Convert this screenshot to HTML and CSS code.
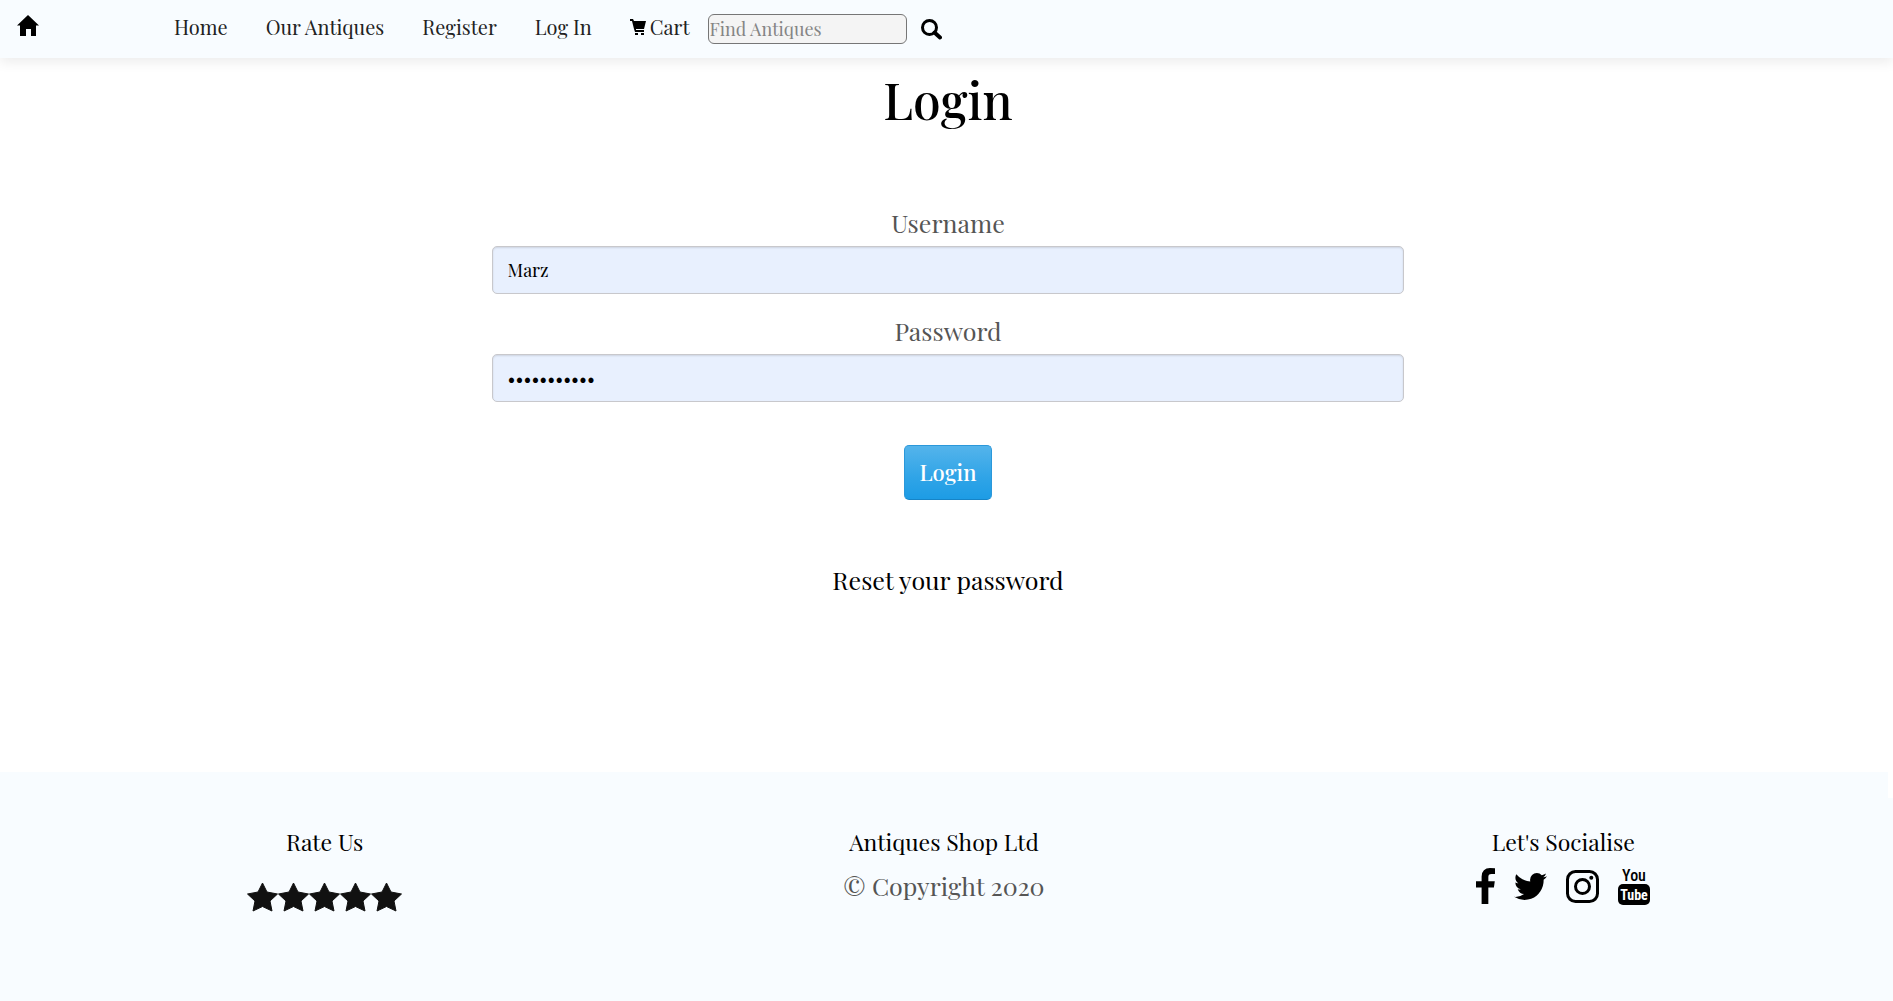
FILE: index.html
```html
<!DOCTYPE html>
<html lang="en">
<head>
<meta charset="utf-8">
<meta name="viewport" content="width=device-width, initial-scale=1">
<title>Login - Antiques Shop</title>
<link rel="stylesheet" href="styles.css">
</head>
<body>
<header class="navbar">
  <a class="brand" href="#" aria-label="Antiques Shop home">
    <svg width="22" height="22" viewBox="0 0 22 22"><path d="M11 1 22 11.500h-3V22h-5v-7H9v7H3V11.500H0z"/></svg>
  </a>
  <nav class="links">
    <a href="#">Home</a>
    <a href="#">Our Antiques</a>
    <a href="#">Register</a>
    <a href="#">Log In</a>
    <a class="cart" href="#">
      <svg width="16" height="16" viewBox="0 0 16 16"><path d="M0 0h3l1 2h12l-2 8H6v1h8v2H5L4 10 2 2H0zM5 14h3v2H5zM11 14h3v2h-3z"/></svg>
      Cart
    </a>
  </nav>
  <form class="search">
    <input type="text" placeholder="Find Antiques" aria-label="Find Antiques">
    <button type="submit" aria-label="Search">
      <svg width="21" height="21" viewBox="0 0 21 21" fill="none" stroke="#000"><circle cx="8.500" cy="8.500" r="7" stroke-width="3"/><path d="m13.500 13.500 5.500 5" stroke-width="4" stroke-linecap="round"/></svg>
    </button>
  </form>
</header>

<main class="page">
  <h1>Login</h1>
  <form class="login">
    <label for="username">Username</label>
    <input id="username" type="text" value="Marz">
    <label for="password">Password</label>
    <input id="password" type="password" value="antiqueshop">
    <button type="submit">Login</button>
  </form>
  <a class="reset" href="#">Reset your password</a>
</main>

<footer class="footer">
  <div class="footer-edge"></div>
  <div class="columns">
    <section>
      <h2>Rate Us</h2>
      <div class="stars" role="img" aria-label="Five stars">
        <svg viewBox="0 0 31 30"><use href="#star"/></svg>
        <svg viewBox="0 0 31 30"><use href="#star"/></svg>
        <svg viewBox="0 0 31 30"><use href="#star"/></svg>
        <svg viewBox="0 0 31 30"><use href="#star"/></svg>
        <svg viewBox="0 0 31 30"><path id="star" d="m15.500 1 4.500 9 10.500 2-7.500 7 2 10-9.500-4.500L6 29l2-10-7.500-7L11 10z" stroke="#111" stroke-linejoin="round"/></svg>
      </div>
    </section>
    <section>
      <h2>Antiques Shop Ltd</h2>
      <p>© Copyright 2020</p>
    </section>
    <section>
      <h2>Let's Socialise</h2>
      <div class="social">
        <a href="#" aria-label="Facebook"><svg width="19" height="36" viewBox="479 0 864 1664" preserveAspectRatio="none"><path d="M1343 12v264h-157q-86 0-116 36t-30 108v189h293l-39 296h-254v759h-306v-759h-255v-296h255v-218q0-186 104-288.500t277-102.500q147 0 228 12z"/></svg></a>
        <a href="#" aria-label="Twitter"><svg width="33" height="27" viewBox="108 256 1576 1280"><path d="M1684 408q-67 98-162 167 1 14 1 42 0 130-38 259.500t-115.500 248.500-184.500 210.500-258 146-323 54.500q-271 0-496-145 35 4 78 4 225 0 401-138-105-2-188-64.500t-114-159.500q33 5 61 5 43 0 85-11-112-23-185.500-111.500t-73.500-205.500v-4q68 38 146 41-66-44-105-115t-39-154q0-88 44-163 121 149 294.500 238.500t371.500 99.500q-8-38-8-74 0-134 94.500-228.500t228.500-94.500q140 0 236 102 109-21 205-78-37 115-142 178 93-10 186-50z"/></svg></a>
        <a href="#" aria-label="Instagram"><svg width="33" height="33" viewBox="0 0 33 33"><rect x="1.500" y="1.500" width="30" height="30" rx="8" fill="none" stroke="#000" stroke-width="3"/><circle cx="16.500" cy="16.500" r="7" fill="none" stroke="#000" stroke-width="3"/><circle cx="25.300" cy="7.700" r="2"/></svg></a>
        <a href="#" aria-label="YouTube"><svg width="32" height="38" viewBox="0 0 32 38"><rect y="17" width="32" height="21" rx="5"/><text class="you" x="16" y="14">You</text><text class="tube" x="16" y="33">Tube</text></svg></a>
      </div>
    </section>
  </div>
</footer>
</body>
</html>
```
FILE: styles.css
```css
* { box-sizing: border-box; }

body {
  margin: 0;
  min-height: 100vh;
  display: flex;
  flex-direction: column;
  background: #fff;
  color: #555;
  font-family: "Playfair Display", "Liberation Serif", serif;
  font-size: 25px;
  line-height: 38px;
}

a { color: #000; text-decoration: none; }
svg { display: block; }
input, button { font-family: inherit; }

.navbar {
  display: flex;
  align-items: center;
  min-height: 58px;
  padding-left: 17px;
  background: #f8fcff;
  box-shadow: 0 4px 12px rgba(0, 0, 0, 0.08);
}

.brand { margin-right: 135px; padding-bottom: 8px; }

.links {
  display: flex;
  gap: 38px;
  padding-bottom: 4px;
  font-size: 20px;
  line-height: 30px;
}

.links a { color: #222; white-space: nowrap; }
.cart { display: flex; align-items: center; gap: 4px; }
.cart svg { fill: #000; }

.search { display: flex; align-items: center; gap: 14px; margin-left: 18px; }

.search input {
  width: 199px;
  height: 30px;
  padding: 1px;
  border: 1px solid #767676;
  border-radius: 6px;
  background: #f4f4f4;
  font-size: 18px;
}

.search input::placeholder { color: #858585; }
.search button { padding: 0; border: 0; background: none; }

.page {
  display: flex;
  flex-direction: column;
  align-items: center;
  padding: 12px 0 173px 3px;
}

h1 {
  margin: 0 0 74px;
  color: #000;
  font-size: 50px;
  font-weight: 500;
  line-height: 60px;
}

.login {
  display: flex;
  flex-direction: column;
  align-items: center;
  width: 48.3%;
}

.login input {
  width: 100%;
  height: 48px;
  margin: 4px 0 18px;
  padding: 1px 15px;
  border: 1px solid #c8c8cc;
  border-radius: 5px;
  background: #e8f0fe;
  box-shadow: inset 0 1px 2px rgba(0, 0, 0, 0.12);
  color: #000;
  font-size: 18px;
}

.login button {
  height: 55px;
  margin-top: 25px;
  padding: 0 15px 2px;
  border: 1px solid #2b98da;
  border-bottom-color: #1684c7;
  border-radius: 5px;
  background: linear-gradient(#54b4eb, #2fa4e7 60%, #1d9ce5);
  color: #fff;
  font-size: 22px;
  font-weight: 500;
}

.reset { margin-top: 61px; }

.footer { flex: 1; background: #f8fcff; text-align: center; }
.footer-edge { height: 26px; border-right: 5px solid #fff; }

.columns {
  display: grid;
  grid-template-columns: repeat(3, 1fr);
  padding: 29px 20px 80px 15px;
}

h2 {
  margin: 0;
  color: #000;
  font-size: 23px;
  font-weight: 400;
  line-height: 30px;
}

p { margin: 10px 0 0; }

.stars { display: flex; justify-content: center; margin-top: 25px; }
.stars svg { width: 31px; height: 30px; fill: #111; }

.social {
  display: flex;
  align-items: center;
  justify-content: center;
  gap: 19px;
  margin-top: 10px;
}

.you, .tube {
  font-family: "Roboto Condensed", Roboto, sans-serif;
  text-anchor: middle;
}

.you { font-size: 16px; font-weight: 500; }
.tube { font-size: 14px; font-weight: 700; fill: #fff; }
```
